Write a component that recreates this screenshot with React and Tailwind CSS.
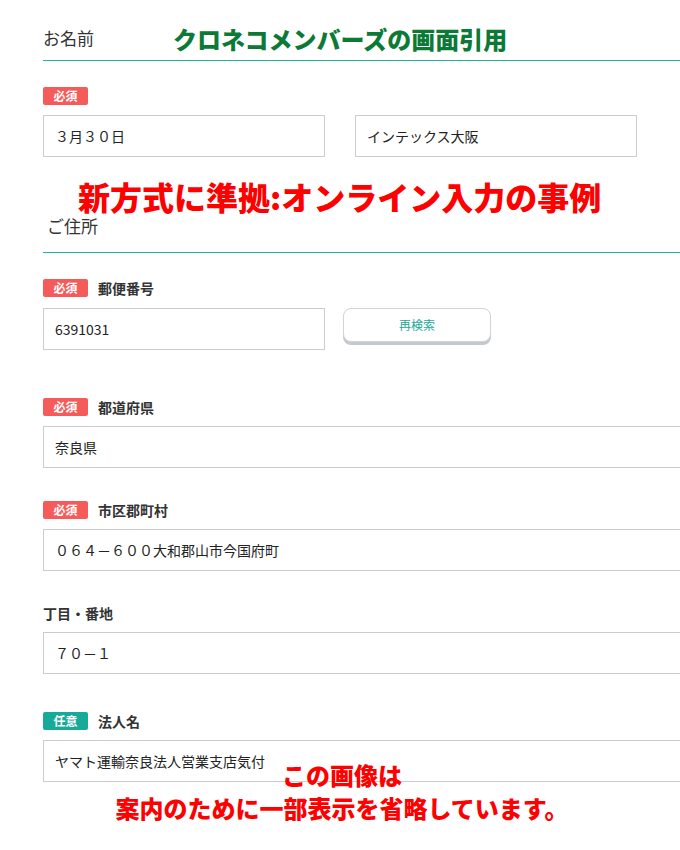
import React from "react";

const Badge = ({ kind = "required" }) => (
  <span
    className={
      "inline-flex h-[18px] w-[45px] items-center justify-center rounded-[2px] text-[12px] font-bold leading-none text-white " +
      (kind === "required" ? "bg-[#f55b5b]" : "bg-[#18aa98]")
    }
  >
    {kind === "required" ? "必須" : "任意"}
  </span>
);

const FieldLabel = ({ kind, label }) => (
  <div className="flex h-[18px] items-center gap-[10px]">
    {kind && <Badge kind={kind} />}
    {label && <span className="text-[14px] font-bold leading-none text-[#333]">{label}</span>}
  </div>
);

const TextBox = ({ value, className = "w-[282px]" }) => (
  <div className={"flex h-[42px] items-center border border-[#cccccc] bg-white pl-[11px] text-[14px] text-[#222] " + className}>
    {value}
  </div>
);

const SectionTitle = ({ children, className = "" }) => (
  <div className={"border-b border-[#1eb0a0] text-[17px] leading-[24px] text-[#333] " + className}>{children}</div>
);

export default function App() {
  return (
    <div
      className="relative h-[850px] w-[680px] overflow-hidden bg-white"
      style={{ fontFamily: '"Noto Sans CJK JP", "Noto Sans", sans-serif' }}
    >
      <div className="pl-[43px]">
        <div className="relative">
          <SectionTitle className="pt-[26px] pb-[10px]">お名前</SectionTitle>
          <div className="absolute left-[130px] top-[23px] text-[24px] font-black leading-[32px] text-[#0b7a36]">
            クロネコメンバーズの画面引用
          </div>
        </div>

        <div className="mt-[26px]">
          <FieldLabel kind="required" />
        </div>
        <div className="mt-[10px] flex gap-[30px]">
          <TextBox value="３月３０日" />
          <TextBox value="インテックス大阪" />
        </div>

        <div className="ml-[35px] mt-[21px] text-[32px] font-black leading-[36px] text-[#ff0000]">
          新方式に準拠:オンライン入力の事例
        </div>

        <SectionTitle className="pb-[14px] pl-[4px]">ご住所</SectionTitle>

        <div className="mt-[26px]">
          <FieldLabel kind="required" label="郵便番号" />
        </div>
        <div className="mt-[11px] flex items-start gap-[18px]">
          <TextBox value="6391031" />
          <button
            type="button"
            className="h-[34px] w-[148px] rounded-[8px] border border-[#d0d3d8] bg-white text-[12px] text-[#1aa898] shadow-[0_3px_0_#c5c9cf]"
          >
            再検索
          </button>
        </div>

        <div className="mt-[48px]">
          <FieldLabel kind="required" label="都道府県" />
        </div>
        <div className="mt-[10px]">
          <TextBox value="奈良県" className="w-[660px]" />
        </div>

        <div className="mt-[33px]">
          <FieldLabel kind="required" label="市区郡町村" />
        </div>
        <div className="mt-[10px]">
          <TextBox value="０６４－６００大和郡山市今国府町" className="w-[660px]" />
        </div>

        <div className="mt-[33px]">
          <FieldLabel label="丁目・番地" />
        </div>
        <div className="mt-[10px]">
          <TextBox value="７０－１" className="w-[660px]" />
        </div>

        <div className="mt-[38px]">
          <FieldLabel kind="optional" label="法人名" />
        </div>
        <div className="mt-[10px]">
          <TextBox value="ヤマト運輸奈良法人営業支店気付" className="w-[660px]" />
        </div>
      </div>

      <div className="absolute left-0 top-[758px] w-[684px] text-center text-[24px] font-black leading-[33px] text-[#ff0000]">
        <div>この画像は</div>
        <div>案内のために一部表示を省略しています。</div>
      </div>
    </div>
  );
}
